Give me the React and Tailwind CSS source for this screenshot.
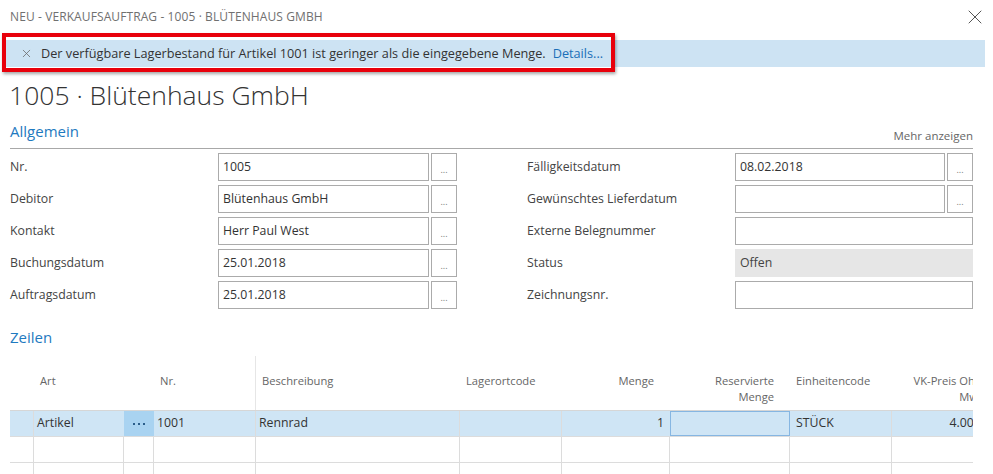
import { X } from "lucide-react";

const leftFields = [
  { label: "Nr.", value: "1005", lookup: true },
  { label: "Debitor", value: "Blütenhaus GmbH", lookup: true },
  { label: "Kontakt", value: "Herr Paul West", lookup: true },
  { label: "Buchungsdatum", value: "25.01.2018", lookup: true },
  { label: "Auftragsdatum", value: "25.01.2018", lookup: true },
];

const rightFields = [
  { label: "Fälligkeitsdatum", value: "08.02.2018", lookup: true },
  { label: "Gewünschtes Lieferdatum", value: "", lookup: true },
  { label: "Externe Belegnummer", value: "" },
  { label: "Status", value: "Offen", readOnly: true },
  { label: "Zeichnungsnr.", value: "" },
];

const FieldRow = ({ field }) => (
  <div className="flex items-center h-[28px]">
    <div className="w-[208px] shrink-0 text-[12.3px] text-[#444]">{field.label}</div>
    {field.readOnly ? (
      <div className="flex-1 h-full bg-[#e6e6e6] px-[5px] flex items-center text-[12.3px] text-[#444]">
        {field.value}
      </div>
    ) : (
      <div className="flex-1 h-full border border-[#ababab] px-[4px] flex items-center text-[12.3px] text-[#333]">
        {field.value}
      </div>
    )}
    {field.lookup && (
      <div className="ml-[2px] w-[26px] h-full border border-[#ababab] flex items-end justify-center pb-[6px] text-[9px] leading-none text-[#777]">
        ...
      </div>
    )}
  </div>
);

const cols = [
  { key: "gutter", w: "w-[24px]" },
  { key: "art", w: "w-[90px]" },
  { key: "dots", w: "w-[30px]" },
  { key: "nr", w: "w-[102px]" },
  { key: "desc", w: "w-[204px]" },
  { key: "lager", w: "w-[102px]" },
  { key: "menge", w: "w-[108px]" },
  { key: "res", w: "w-[120px]" },
  { key: "einheit", w: "w-[102px]" },
  { key: "vk", w: "w-[110px]" },
];

const EmptyRow = () => (
  <div className="flex h-[26px] border-b border-[#dcdcdc]">
    {cols.map((c, i) => (
      <div key={c.key} className={`${c.w} shrink-0 h-full ${i < cols.length - 1 ? "border-r border-[#dcdcdc]" : ""}`} />
    ))}
  </div>
);

export default function App() {
  return (
    <div className="relative w-[993px] h-[474px] overflow-hidden bg-white font-['Open_Sans',sans-serif] text-[#333]">
      {/* Title */}
      <div className="flex items-center justify-between pl-[10px] pr-[6px] h-[34px]">
        <span className="text-[12px] text-[#707070] tracking-[0.1px]">NEU - VERKAUFSAUFTRAG - 1005 · BLÜTENHAUS GMBH</span>
        <X className="w-[24px] h-[24px] text-[#555]" strokeWidth={1} />
      </div>

      {/* Notification */}
      <div className="relative mt-[6px] ml-[5px] mr-[8px] h-[27px] bg-[#cde3f3] flex items-center pl-[15px]">
        <X className="w-[13px] h-[13px] text-[#666]" strokeWidth={1.4} />
        <span className="ml-[8px] text-[12.7px] text-[#333]">
          Der verfügbare Lagerbestand für Artikel 1001 ist geringer als die eingegebene Menge.
        </span>
        <span className="ml-[7px] text-[12.7px] text-[#1b6fb8]">Details...</span>
      </div>
      <div className="absolute left-[2px] top-[33px] w-[613px] h-[39px] border-[4px] border-[#e8000b] shadow-[1px_2px_3px_rgba(0,0,0,0.35)]" />

      {/* Heading */}
      <h1 className="mt-[12px] ml-[9px] text-[26.5px] leading-[32px] font-light text-[#333]">1005 · Blütenhaus GmbH</h1>

      {/* Allgemein */}
      <div className="mt-[10px] ml-[10px] mr-[20px] flex items-end justify-between border-b border-[#a8a8a8] pb-[4px]">
        <span className="text-[15px] text-[#1f7ac0] leading-[20px] mb-[3px]">Allgemein</span>
        <span className="text-[11.5px] text-[#666]">Mehr anzeigen</span>
      </div>

      <div className="flex ml-[10px] mr-[20px] mt-[4px] gap-[70px]">
        <div className="flex flex-col gap-[4px] w-[447px]">
          {leftFields.map((f) => (
            <FieldRow key={f.label} field={f} />
          ))}
        </div>
        <div className="flex flex-col gap-[4px] flex-1">
          {rightFields.map((f) => (
            <FieldRow key={f.label} field={f} />
          ))}
        </div>
      </div>

      {/* Zeilen */}
      <div className="mt-[18px] ml-[10px] text-[15px] leading-[20px] text-[#1f7ac0]">Zeilen</div>

      <div className="mt-[9px] ml-[10px] w-[963px] overflow-hidden">
        <div className="flex h-[54px] text-[11.2px] text-[#666] w-[1000px]">
          <div className="w-[24px] shrink-0" />
          <div className="w-[90px] shrink-0 pl-[6px] pt-[17px]">Art</div>
          <div className="w-[30px] shrink-0" />
          <div className="w-[102px] shrink-0 pl-[6px] pt-[17px] border-r border-[#e6e6e6]">Nr.</div>
          <div className="w-[204px] shrink-0 pl-[6px] pt-[17px]">Beschreibung</div>
          <div className="w-[102px] shrink-0 pl-[6px] pt-[17px]">Lagerortcode</div>
          <div className="w-[108px] shrink-0 pr-[16px] pt-[17px] text-right">Menge</div>
          <div className="w-[120px] shrink-0 pr-[16px] pt-[17px] text-right leading-[16px]">
            Reservierte
            <br />
            Menge
          </div>
          <div className="w-[102px] shrink-0 pl-[6px] pt-[17px]">Einheitencode</div>
          <div className="w-[110px] shrink-0 pr-[14px] pt-[17px] text-right leading-[16px] whitespace-nowrap">
            VK-Preis Ohne
            <br />
            MwSt
          </div>
        </div>

        <div className="w-[1000px] border-t border-[#d6d6d6]">
          <div className="flex h-[26px] bg-[#cfe5f5] border-b border-[#dcdcdc] text-[12.3px] text-[#333]">
            <div className="w-[24px] shrink-0 border-r border-[#dcdcdc]" />
            <div className="w-[90px] shrink-0 pl-[3px] flex items-center">Artikel</div>
            <div className="w-[30px] shrink-0 bg-[#a9d3f1] flex items-center justify-center gap-[3px]">
              <span className="w-[2px] h-[2px] bg-[#2a5d8a]" />
              <span className="w-[2px] h-[2px] bg-[#2a5d8a]" />
              <span className="w-[2px] h-[2px] bg-[#2a5d8a]" />
            </div>
            <div className="w-[102px] shrink-0 pl-[3px] flex items-center border-r border-[#dcdcdc]">1001</div>
            <div className="w-[204px] shrink-0 pl-[3px] flex items-center border-r border-[#dcdcdc]">Rennrad</div>
            <div className="w-[102px] shrink-0 border-r border-[#dcdcdc]" />
            <div className="w-[108px] shrink-0 pr-[6px] flex items-center justify-end">1</div>
            <div className="w-[120px] shrink-0 border border-[#86b6e2]" />
            <div className="w-[102px] shrink-0 pl-[6px] flex items-center border-r border-[#dcdcdc]">STÜCK</div>
            <div className="w-[110px] shrink-0 pr-[4px] flex items-center justify-end">4.000,00</div>
          </div>
          <EmptyRow />
          <EmptyRow />
        </div>
      </div>
    </div>
  );
}
